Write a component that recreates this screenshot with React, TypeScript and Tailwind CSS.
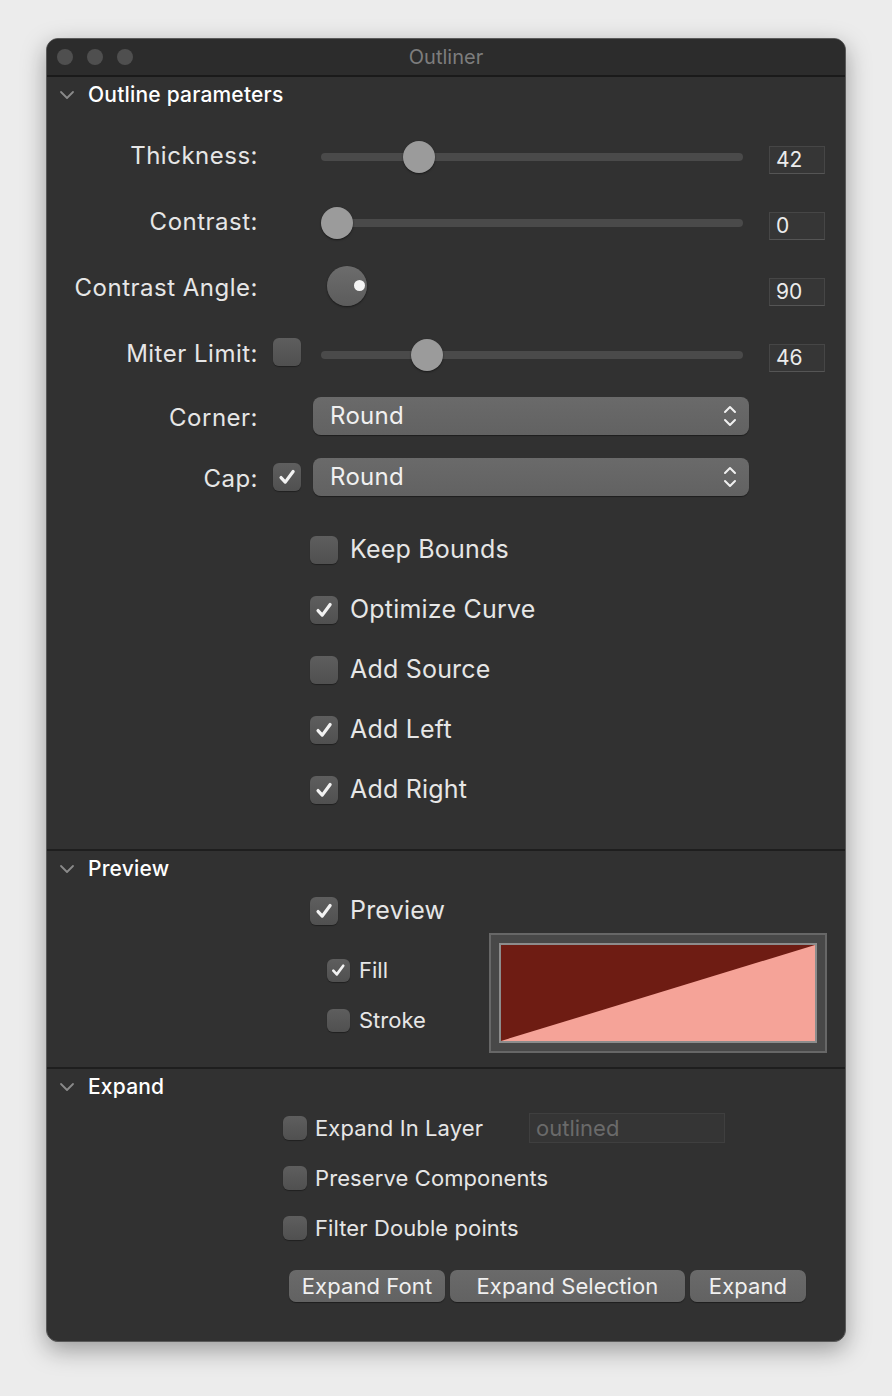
// Outliner palette: dark macOS-style panel with outline, preview and expand sections.

const FONT = { fontFamily: 'Inter, "Noto Sans", "Liberation Sans", sans-serif' };

function Chevron() {
  return (
    <svg width="16" height="10" viewBox="0 0 16 10" className="shrink-0">
      <path d="M2 2 L8 8 L14 2" fill="none" stroke="#8a8a8a" strokeWidth="1.8" strokeLinecap="round" strokeLinejoin="round" />
    </svg>
  );
}

function SectionHeader({ title }: { title: string }) {
  return (
    <div className="h-[38px] flex items-center pl-[12px] gap-[13px] pb-[3px]">
      <Chevron />
      <span className="text-[21px] text-white font-medium tracking-[0.2px]">{title}</span>
    </div>
  );
}

function Checkbox({ checked, size = 28 }: { checked?: boolean; size?: number }) {
  return (
    <div
      className="shrink-0 rounded-[6px] bg-gradient-to-b from-[#5e5e5e] to-[#505050] shadow-[0_1px_1px_rgba(0,0,0,0.35)] flex items-center justify-center"
      style={{ width: size, height: size }}
    >
      {checked && (
        <svg width={size * 0.72} height={size * 0.72} viewBox="0 0 20 20">
          <path d="M4 10.5 L8.2 15 L16 4.5" fill="none" stroke="#f2f2f2" strokeWidth="3.2" strokeLinecap="round" strokeLinejoin="round" />
        </svg>
      )}
    </div>
  );
}

function Slider({ value, max = 200 }: { value: number; max?: number }) {
  const left = (value / max) * 390;
  return (
    <div className="relative w-[422px] h-[34px] flex items-center mt-[6px]">
      <div className="w-full h-[8px] rounded-full bg-[#4a4a4a]" />
      <div
        className="absolute top-[1px] w-[32px] h-[32px] rounded-full bg-[#9b9b9b] shadow-[0_1px_2px_rgba(0,0,0,0.5)]"
        style={{ left }}
      />
    </div>
  );
}

function ValueBox({ value }: { value: string }) {
  return (
    <div className="mt-[12px] w-[56px] h-[28px] bg-[#363636] border border-[#464646] border-b-[#555] flex items-end pl-[6px] pb-[1px] text-[21px] leading-[24px] text-[#ececec]">
      {value}
    </div>
  );
}

function Popup({ label }: { label: string }) {
  return (
    <div className="w-[436px] h-[38px] rounded-[8px] bg-gradient-to-b from-[#6a6a6a] to-[#626262] shadow-[0_1px_1px_rgba(0,0,0,0.4)] flex items-center justify-between pl-[17px] pr-[12px]">
      <span className="text-[24px] tracking-[0.3px] text-[#f0f0f0]">{label}</span>
      <svg width="14" height="26" viewBox="0 0 14 26">
        <path d="M2 9 L7 4 L12 9 M2 17 L7 22 L12 17" fill="none" stroke="#f0f0f0" strokeWidth="2" strokeLinecap="round" strokeLinejoin="round" />
      </svg>
    </div>
  );
}

function ParamRow({
  label,
  height,
  check,
  children,
  value,
}: {
  label: string;
  height: number;
  check?: boolean | null;
  children: React.ReactNode;
  value?: string;
}) {
  return (
    <div className="flex items-center" style={{ height }}>
      <div className="w-[211px] pt-[4px] text-right text-[24px] tracking-[0.5px] text-[#e6e6e6] whitespace-nowrap">{label}</div>
      <div className="w-[55px] pl-[15px] flex items-center">
        {check !== undefined && check !== null && <Checkbox checked={check} />}
      </div>
      <div className="w-[456px] flex items-center">{children}</div>
      {value !== undefined && <ValueBox value={value} />}
    </div>
  );
}

function BigCheck({ label, checked }: { label: string; checked?: boolean }) {
  return (
    <div className="h-[60px] flex items-center pl-[263px] gap-[12px] pt-[2px]">
      <Checkbox checked={checked} />
      <span className="text-[25px] tracking-[0.2px] text-[#e6e6e6]">{label}</span>
    </div>
  );
}

function SmallCheck({ label, checked }: { label: string; checked?: boolean }) {
  return (
    <div className="h-[50px] flex items-center gap-[9px]">
      <Checkbox checked={checked} size={23} />
      <span className="text-[22px] text-[#e6e6e6]">{label}</span>
    </div>
  );
}

function ExpandCheck({ label, children }: { label: string; children?: React.ReactNode }) {
  return (
    <div className="h-[50px] flex items-center pl-[236px]">
      <Checkbox size={24} />
      <span className="ml-[8px] w-[214px] text-[22px] tracking-[0.1px] text-[#e6e6e6] whitespace-nowrap">{label}</span>
      {children}
    </div>
  );
}

function Button({ label, width }: { label: string; width: number }) {
  return (
    <div
      className="h-[32px] rounded-[7px] bg-gradient-to-b from-[#6a6a6a] to-[#626262] shadow-[0_1px_1px_rgba(0,0,0,0.4)] flex items-center justify-center text-[22px] tracking-[0.1px] text-[#f0f0f0]"
      style={{ width }}
    >
      {label}
    </div>
  );
}

export default function App() {
  return (
    <div className="w-[892px] h-[1396px] bg-[#ececec] pt-[38px] pl-[46px]" style={FONT}>
      <div className="w-[800px] h-[1304px] rounded-[12px] bg-[#313131] border border-[#5a5a5a] shadow-[0_8px_24px_rgba(0,0,0,0.35)] overflow-hidden flex flex-col">
        {/* title bar */}
        <div className="relative h-[38px] shrink-0 bg-[#2c2c2c] border-b-2 border-[#1a1a1a] flex items-center justify-center">
          <div className="absolute left-[10px] top-[10px] flex gap-[14px]">
            <div className="w-[16px] h-[16px] rounded-full bg-[#4f4f4f]" />
            <div className="w-[16px] h-[16px] rounded-full bg-[#4f4f4f]" />
            <div className="w-[16px] h-[16px] rounded-full bg-[#4f4f4f]" />
          </div>
          <span className="text-[20px] text-[#7d7d7d]">Outliner</span>
        </div>

        {/* outline parameters */}
        <SectionHeader title="Outline parameters" />
        <div className="pt-[6px]">
          <ParamRow label="Thickness:" height={66} value="42">
            <div className="pl-[8px]"><Slider value={42} /></div>
          </ParamRow>
          <ParamRow label="Contrast:" height={66} value="0">
            <div className="pl-[8px]"><Slider value={0} /></div>
          </ParamRow>
          <ParamRow label="Contrast Angle:" height={66} value="90">
            <div className="pl-[14px]">
              <div className="relative w-[40px] h-[40px] rounded-full bg-gradient-to-b from-[#6c6c6c] to-[#5c5c5c] shadow-[0_1px_2px_rgba(0,0,0,0.5)]">
                <div className="absolute right-[2px] top-[14px] w-[11px] h-[11px] rounded-full bg-[#f4f4f4]" />
              </div>
            </div>
          </ParamRow>
          <ParamRow label="Miter Limit:" height={66} check={false} value="46">
            <div className="pl-[8px]"><Slider value={46} /></div>
          </ParamRow>
          <ParamRow label="Corner:" height={62}>
            <Popup label="Round" />
          </ParamRow>
          <ParamRow label="Cap:" height={60} check={true}>
            <Popup label="Round" />
          </ParamRow>
        </div>
        <div className="pt-[12px] pb-[30px]">
          <BigCheck label="Keep Bounds" />
          <BigCheck label="Optimize Curve" checked />
          <BigCheck label="Add Source" />
          <BigCheck label="Add Left" checked />
          <BigCheck label="Add Right" checked />
        </div>

        {/* preview */}
        <div className="border-t-2 border-[#1e1e1e]">
          <SectionHeader title="Preview" />
          <div className="h-[44px] flex items-center pl-[263px] gap-[12px]">
            <Checkbox checked />
            <span className="text-[25px] tracking-[0.2px] text-[#e6e6e6]">Preview</span>
          </div>
          <div className="flex pb-[14px]">
            <div className="pl-[280px] pt-[12px] w-[442px]">
              <SmallCheck label="Fill" checked />
              <SmallCheck label="Stroke" />
            </div>
            <div className="w-[338px] h-[120px] border-2 border-[#676767] bg-[#484848] p-[8px]">
              <div className="w-full h-full border-2 border-[#8c8c8c]">
                <svg className="w-full h-full block" viewBox="0 0 100 100" preserveAspectRatio="none">
                  <rect x="0" y="0" width="100" height="100" fill="#6e1c13" />
                  <polygon points="0,100 100,0 100,100" fill="#f5a398" />
                </svg>
              </div>
            </div>
          </div>
        </div>

        {/* expand */}
        <div className="border-t-2 border-[#1e1e1e]">
          <div className="-mb-[4px]">
            <SectionHeader title="Expand" />
          </div>
          <ExpandCheck label="Expand In Layer">
            <div className="w-[196px] h-[30px] bg-[#353535] border border-[#3f3f3f] flex items-center pl-[6px] text-[22px] text-[#6a6a6a]">
              outlined
            </div>
          </ExpandCheck>
          <ExpandCheck label="Preserve Components" />
          <ExpandCheck label="Filter Double points" />
          <div className="pt-[17px] pl-[242px] flex gap-[5px]">
            <Button label="Expand Font" width={156} />
            <Button label="Expand Selection" width={235} />
            <Button label="Expand" width={116} />
          </div>
        </div>
      </div>
    </div>
  );
}
